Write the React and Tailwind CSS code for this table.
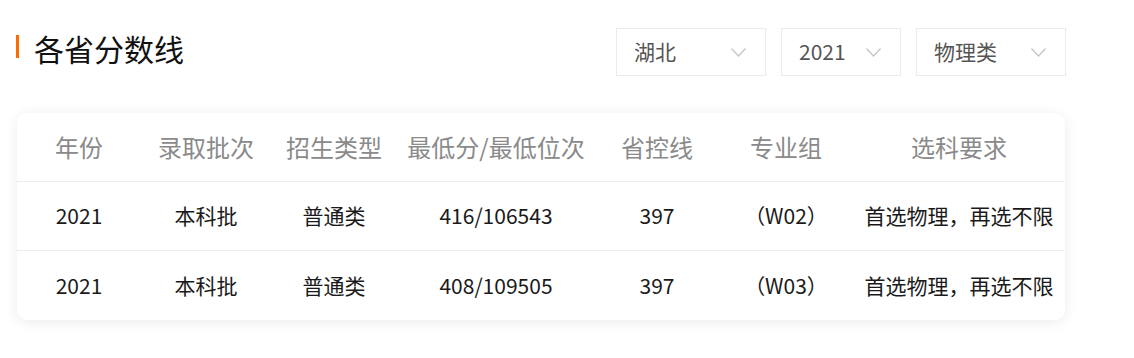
import { useState } from "react";

const rows = [
  { year: "2021", batch: "本科批", type: "普通类", score: "416/106543", line: "397", group: "（W02）", req: "首选物理，再选不限" },
  { year: "2021", batch: "本科批", type: "普通类", score: "408/109505", line: "397", group: "（W03）", req: "首选物理，再选不限" },
];

const heads = ["年份", "录取批次", "招生类型", "最低分/最低位次", "省控线", "专业组", "选科要求"];

const Chevron = () => (
  <svg width="15" height="9" viewBox="0 0 15 9" fill="none">
    <polyline points="0.5,0.5 7.5,8 14.5,0.5" stroke="#c4c4c4" strokeWidth="1.2" />
  </svg>
);

const Select = ({ value, width }) => (
  <div
    className={`flex items-center justify-between h-[48px] pl-[17px] pr-[19px] border border-[#ebebeb] bg-white cursor-pointer ${width}`}
  >
    <span className="text-[21px] text-[#555555]">{value}</span>
    <Chevron />
  </div>
);

const App = () => {
  const [province] = useState("湖北");

  return (
    <div
      className="w-[1134px] h-[358px] bg-white pl-4 pt-[28px]"
      style={{ fontFamily: '"Noto Sans CJK SC", "Noto Sans", sans-serif' }}
    >
      <div className="w-[1050px] flex justify-between items-start">
        <div className="h-[40px] flex items-center gap-[15px]">
          <span className="w-[3px] h-[23px] bg-[#ff6a00] -mt-[3px]" />
          <h2 className="text-[30px] leading-[40px] text-[#111111]">各省分数线</h2>
        </div>
        <div className="flex gap-[15px]">
          <Select value={province} width="w-[150px]" />
          <Select value="2021" width="w-[120px]" />
          <Select value="物理类" width="w-[150px]" />
        </div>
      </div>

      <div className="mt-[37px] ml-px w-[1048px] bg-white rounded-[10px] shadow-[0_2px_14px_rgba(0,0,0,0.08)]">
        <div className="grid grid-cols-[124px_130px_126px_198px_124px_134px_1fr] h-[69px] items-center border-b border-[#ececec] text-[24px] text-[#8a8a8a]">
          {heads.map((h) => (
            <div key={h} className="text-center">{h}</div>
          ))}
        </div>
        {rows.map((r, i) => (
          <div
            key={r.group}
            className={`grid grid-cols-[124px_130px_126px_198px_124px_134px_1fr] h-[69px] items-center text-[21px] text-[#1a1a1a] ${i === 0 ? "border-b border-[#ececec]" : ""}`}
          >
            <div className="text-center">{r.year}</div>
            <div className="text-center">{r.batch}</div>
            <div className="text-center">{r.type}</div>
            <div className="text-center">{r.score}</div>
            <div className="text-center">{r.line}</div>
            <div className="text-center">{r.group}</div>
            <div className="text-center">{r.req}</div>
          </div>
        ))}
      </div>
    </div>
  );
};

export default App;
